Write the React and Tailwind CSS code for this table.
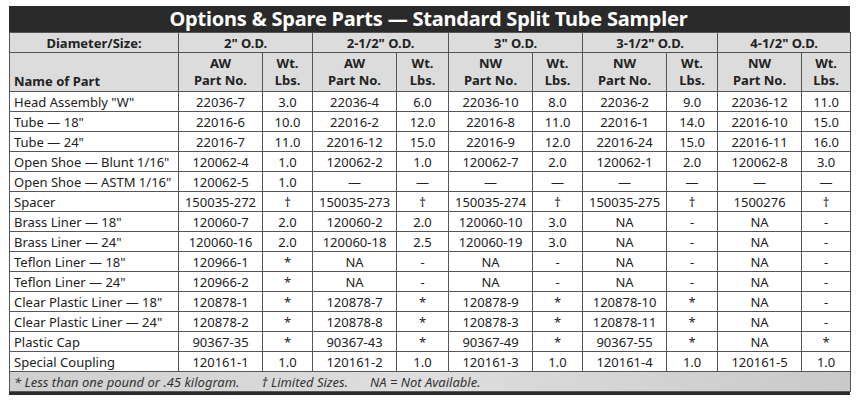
const sizes = ['2" O.D.', '2-1/2" O.D.', '3" O.D.', '3-1/2" O.D.', '4-1/2" O.D.'];
const types = ['AW', 'AW', 'NW', 'NW', 'NW'];

const rows = [
  ['Head Assembly "W"', '22036-7', '3.0', '22036-4', '6.0', '22036-10', '8.0', '22036-2', '9.0', '22036-12', '11.0'],
  ['Tube — 18"', '22016-6', '10.0', '22016-2', '12.0', '22016-8', '11.0', '22016-1', '14.0', '22016-10', '15.0'],
  ['Tube — 24"', '22016-7', '11.0', '22016-12', '15.0', '22016-9', '12.0', '22016-24', '15.0', '22016-11', '16.0'],
  ['Open Shoe — Blunt 1/16"', '120062-4', '1.0', '120062-2', '1.0', '120062-7', '2.0', '120062-1', '2.0', '120062-8', '3.0'],
  ['Open Shoe — ASTM 1/16"', '120062-5', '1.0', '—', '—', '—', '—', '—', '—', '—', '—'],
  ['Spacer', '150035-272', '†', '150035-273', '†', '150035-274', '†', '150035-275', '†', '1500276', '†'],
  ['Brass Liner — 18"', '120060-7', '2.0', '120060-2', '2.0', '120060-10', '3.0', 'NA', '-', 'NA', '-'],
  ['Brass Liner — 24"', '120060-16', '2.0', '120060-18', '2.5', '120060-19', '3.0', 'NA', '-', 'NA', '-'],
  ['Teflon Liner — 18"', '120966-1', '*', 'NA', '-', 'NA', '-', 'NA', '-', 'NA', '-'],
  ['Teflon Liner — 24"', '120966-2', '*', 'NA', '-', 'NA', '-', 'NA', '-', 'NA', '-'],
  ['Clear Plastic Liner — 18"', '120878-1', '*', '120878-7', '*', '120878-9', '*', '120878-10', '*', 'NA', '-'],
  ['Clear Plastic Liner — 24"', '120878-2', '*', '120878-8', '*', '120878-3', '*', '120878-11', '*', 'NA', '-'],
  ['Plastic Cap', '90367-35', '*', '90367-43', '*', '90367-49', '*', '90367-55', '*', 'NA', '*'],
  ['Special Coupling', '120161-1', '1.0', '120161-2', '1.0', '120161-3', '1.0', '120161-4', '1.0', '120161-5', '1.0'],
];

const colWidths = [169, 84, 50, 84, 52, 84, 50, 84, 51, 84, 49];

export default function App() {
  return (
    <div className="w-[858px] h-[401px] bg-white pt-[6px] pl-[9px]" style={{ fontFamily: '"Noto Sans", "Open Sans", sans-serif' }}>
      <div className="w-[841px] border-b-[3px] border-r-2 border-[#2b2b2b]">
        <div className="h-[26px] bg-[#2a2a2a] text-white font-bold text-[20px] leading-[26px] text-center tracking-[-0.2px]">
          Options &amp; Spare Parts — Standard Split Tube Sampler
        </div>
        <table className="w-full table-fixed border-collapse text-[13px] text-[#222]">
          <colgroup>
            {colWidths.map((w, i) => (
              <col key={i} style={{ width: w }} />
            ))}
          </colgroup>
          <tbody>
            <tr className="h-[20px] bg-[#dcdcdc] font-bold">
              <td className="border border-[#555] text-center leading-[18px]">Diameter/Size:</td>
              {sizes.map((s) => (
                <td key={s} colSpan={2} className="border border-[#555] text-center leading-[18px]">
                  {s}
                </td>
              ))}
            </tr>
            <tr className="h-[39px] bg-[#dcdcdc] font-bold">
              <td className="border border-[#555] px-[4px] align-bottom leading-[18px] pb-[1px]">Name of Part</td>
              {types.map((t, i) => [
                <td key={'p' + i} className="border border-[#555] text-center leading-[17px]">
                  {t}
                  <br />
                  Part No.
                </td>,
                <td key={'w' + i} className="border border-[#555] text-center leading-[17px]">
                  Wt.
                  <br />
                  Lbs.
                </td>,
              ])}
            </tr>
            {rows.map((r) => (
              <tr key={r[0]} className="h-[20px] bg-white">
                {r.map((c, i) => (
                  <td
                    key={i}
                    className={`border border-[#555] leading-[18px] whitespace-nowrap ${i === 0 ? 'px-[4px] text-left' : 'text-center'}`}
                  >
                    {c}
                  </td>
                ))}
              </tr>
            ))}
            <tr className="h-[20px]">
              <td colSpan={11} className="border border-[#555] bg-gradient-to-r from-[#cfcfcf] via-[#dedede] to-[#c9c9c9] px-[4px] italic text-[13px] leading-[18px] text-[#333] whitespace-nowrap">
                * Less than one pound or .45 kilogram.
                <span className="ml-[22px]">† Limited Sizes.</span>
                <span className="ml-[22px]">NA = Not Available.</span>
              </td>
            </tr>
          </tbody>
        </table>
      </div>
    </div>
  );
}
